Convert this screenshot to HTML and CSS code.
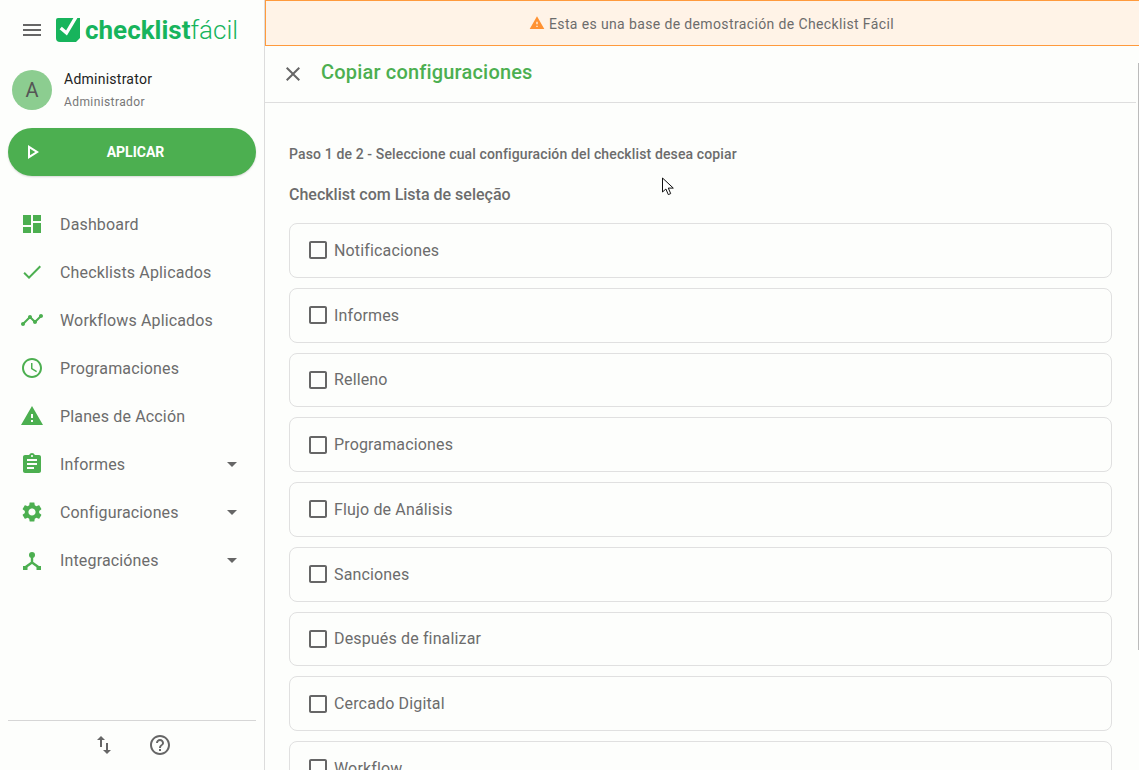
FILE: index.html
```html
<!DOCTYPE html>
<html lang="es">
<head>
    <meta charset="UTF-8">
    <meta name="viewport" content="width=device-width, initial-scale=1.0">
    <title>Copiar configuraciones</title>
    <link rel="stylesheet" href="styles.css">
</head>
<body>

    <svg class="icon-defs" width="0" height="0">
        <symbol id="i-box" viewBox="0 0 24 24"><path d="M19 5v14H5V5h14m0-2H5c-1.1 0-2 .9-2 2v14c0 1.1.9 2 2 2h14c1.1 0 2-.9 2-2V5c0-1.1-.9-2-2-2z"/></symbol>
        <symbol id="i-caret" viewBox="0 0 24 24"><path d="M7 10l5 5 5-5z"/></symbol>
    </svg>

    <aside class="sidebar">
        <div class="brand">
            <svg class="menu-icon" viewBox="0 0 24 24"><path d="M3 18h18v-2H3v2zm0-5h18v-2H3v2zm0-7v2h18V6H3z"/></svg>
            <div class="logo">
                <svg class="logo-mark" viewBox="0 0 24 24">
                    <path fill="#17b45c" d="M0 2a2 2 0 0 1 2-2h22v20l-4 4H4a4 4 0 0 1-4-4z"/>
                    <path fill="none" stroke="#fff" stroke-width="3.4" d="M4.7 10l5.8 5L20 -1"/>
                </svg>
                <span class="logo-text"><b>checklist</b>fácil</span>
            </div>
        </div>

        <div class="user">
            <div class="avatar">A</div>
            <div class="user-info">
                <div class="user-name">Administrator</div>
                <div class="user-role">Administrador</div>
            </div>
        </div>

        <button class="apply-btn">
            <svg viewBox="0 0 24 24"><path d="M10 8.64L15.27 12 10 15.36V8.64M8 5v14l11-7L8 5z"/></svg>
            <span>APLICAR</span>
        </button>

        <nav class="nav">
            <a class="nav-item">
                <svg class="nav-icon" viewBox="0 0 24 24"><path d="M3 13h8V3H3v10zm0 8h8v-6H3v6zm10 0h8V11h-8v10zm0-18v6h8V3h-8z"/></svg>
                Dashboard
            </a>
            <a class="nav-item">
                <svg class="nav-icon" viewBox="0 0 24 24"><path d="M9 16.17L4.83 12l-1.42 1.41L9 19 21 7l-1.41-1.41z"/></svg>
                Checklists Aplicados
            </a>
            <a class="nav-item">
                <svg class="nav-icon" viewBox="0 0 24 24"><path d="M23 8c0 1.1-.9 2-2 2-.18 0-.35-.02-.51-.07l-3.56 3.55c.05.16.07.34.07.52 0 1.1-.9 2-2 2s-2-.9-2-2c0-.18.02-.36.07-.52l-2.55-2.55c-.16.05-.34.07-.52.07s-.36-.02-.52-.07l-4.55 4.56c.05.16.07.33.07.51 0 1.1-.9 2-2 2s-2-.9-2-2 .9-2 2-2c.18 0 .35.02.51.07l4.56-4.55C8.02 9.36 8 9.18 8 9c0-1.1.9-2 2-2s2 .9 2 2c0 .18-.02.36-.07.52l2.55 2.55c.16-.05.34-.07.52-.07s.36.02.52.07l3.55-3.56C19.02 8.35 19 8.18 19 8c0-1.1.9-2 2-2s2 .9 2 2z"/></svg>
                Workflows Aplicados
            </a>
            <a class="nav-item">
                <svg class="nav-icon" viewBox="0 0 24 24"><path d="M11.99 2C6.47 2 2 6.48 2 12s4.47 10 9.99 10C17.52 22 22 17.52 22 12S17.52 2 11.99 2zM12 20c-4.42 0-8-3.58-8-8s3.58-8 8-8 8 3.58 8 8-3.58 8-8 8zm.5-13H11v6l5.25 3.15.75-1.23-4.5-2.67z"/></svg>
                Programaciones
            </a>
            <a class="nav-item">
                <svg class="nav-icon" viewBox="0 0 24 24"><path d="M1 21h22L12 2 1 21zm12-3h-2v-2h2v2zm0-4h-2v-4h2v4z"/></svg>
                Planes de Acción
            </a>
            <a class="nav-item">
                <svg class="nav-icon" viewBox="0 0 24 24"><path d="M19 3h-4.18C14.4 1.84 13.3 1 12 1c-1.3 0-2.4.84-2.82 2H5c-1.1 0-2 .9-2 2v14c0 1.1.9 2 2 2h14c1.1 0 2-.9 2-2V5c0-1.1-.9-2-2-2zm-7 0c.55 0 1 .45 1 1s-.45 1-1 1-1-.45-1-1 .45-1 1-1zm2 14H7v-2h7v2zm3-4H7v-2h10v2zm0-4H7V7h10v2z"/></svg>
                Informes
                <svg class="caret"><use href="#i-caret"/></svg>
            </a>
            <a class="nav-item">
                <svg class="nav-icon" viewBox="0 0 24 24"><path d="M19.14 12.94c.04-.3.06-.61.06-.94 0-.32-.02-.64-.07-.94l2.03-1.58c.18-.14.23-.41.12-.61l-1.92-3.32c-.12-.22-.37-.29-.59-.22l-2.39.96c-.5-.38-1.03-.7-1.62-.94l-.36-2.54c-.04-.24-.24-.41-.48-.41h-3.84c-.24 0-.43.17-.47.41l-.36 2.54c-.59.24-1.13.57-1.62.94l-2.39-.96c-.22-.08-.47 0-.59.22L2.74 8.87c-.12.21-.08.47.12.61l2.03 1.58c-.05.3-.09.63-.09.94s.02.64.07.94l-2.03 1.58c-.18.14-.23.41-.12.61l1.92 3.32c.12.22.37.29.59.22l2.39-.96c.5.38 1.03.7 1.62.94l.36 2.54c.05.24.24.41.48.41h3.84c.24 0 .44-.17.47-.41l.36-2.54c.59-.24 1.13-.56 1.62-.94l2.39.96c.22.08.47 0 .59-.22l1.92-3.32c.12-.22.07-.47-.12-.61l-2.01-1.58zM12 15.6c-1.98 0-3.6-1.62-3.6-3.6s1.62-3.6 3.6-3.6 3.6 1.62 3.6 3.6-1.62 3.6-3.6 3.6z"/></svg>
                Configuraciones
                <svg class="caret"><use href="#i-caret"/></svg>
            </a>
            <a class="nav-item">
                <svg class="nav-icon" viewBox="0 0 24 24">
                    <circle cx="12" cy="7" r="3"/>
                    <path fill="none" stroke="#4caf50" stroke-width="2.4" d="M12 9v6M12 14.5l-7 5M12 14.5l7 5"/>
                    <path d="M3 18h4.5v4H3zM16.5 18H21v4h-4.5z"/>
                </svg>
                Integraciónes
                <svg class="caret"><use href="#i-caret"/></svg>
            </a>
        </nav>

        <div class="side-footer">
            <svg viewBox="0 0 24 24"><path d="M16 17.01V10h-2v7.01h-3L15 21l4-3.99h-3zM9 3L5 6.99h3V14h2V6.99h3L9 3z"/></svg>
            <svg viewBox="0 0 24 24"><path d="M11 18h2v-2h-2v2zm1-16C6.48 2 2 6.48 2 12s4.48 10 10 10 10-4.48 10-10S17.52 2 12 2zm0 18c-4.41 0-8-3.59-8-8s3.59-8 8-8 8 3.59 8 8-3.59 8-8 8zm0-14c-2.21 0-4 1.79-4 4h2c0-1.1.9-2 2-2s2 .9 2 2c0 2-3 1.75-3 5h2c0-2.25 3-2.5 3-5 0-2.21-1.79-4-4-4z"/></svg>
        </div>
    </aside>

    <main class="main">
        <div class="demo-banner">
            <svg viewBox="0 0 24 24"><path d="M1 21h22L12 2 1 21zm12-3h-2v-2h2v2zm0-4h-2v-4h2v4z"/></svg>
            <span>Esta es una base de demostración de Checklist Fácil</span>
        </div>

        <header class="page-header">
            <svg viewBox="0 0 24 24"><path d="M19 6.41L17.59 5 12 10.59 6.41 5 5 6.41 10.59 12 5 17.59 6.41 19 12 13.41 17.59 19 19 17.59 13.41 12z"/></svg>
            <h1>Copiar configuraciones</h1>
        </header>

        <section class="content">
            <p class="step">Paso 1 de 2 - Seleccione cual configuración del checklist desea copiar</p>
            <h2 class="checklist-name">Checklist com Lista de seleção</h2>

            <div class="options">
                <label class="option"><svg><use href="#i-box"/></svg>Notificaciones</label>
                <label class="option"><svg><use href="#i-box"/></svg>Informes</label>
                <label class="option"><svg><use href="#i-box"/></svg>Relleno</label>
                <label class="option"><svg><use href="#i-box"/></svg>Programaciones</label>
                <label class="option"><svg><use href="#i-box"/></svg>Flujo de Análisis</label>
                <label class="option"><svg><use href="#i-box"/></svg>Sanciones</label>
                <label class="option"><svg><use href="#i-box"/></svg>Después de finalizar</label>
                <label class="option"><svg><use href="#i-box"/></svg>Cercado Digital</label>
                <label class="option"><svg><use href="#i-box"/></svg>Workflow</label>
            </div>
        </section>

        <div class="scroll-thumb"></div>
    </main>

    <svg class="cursor" viewBox="0 0 13 20"><path d="M1 1v14l3.4-3 2.4 5.6 2.4-1-2.4-5.5h5z"/></svg>

</body>
</html>
```

FILE: styles.css
```css
html, body {
    height: 100%;
}

body {
    display: flex;
    margin: 0;
    overflow: hidden;
    font-family: Roboto, "Liberation Sans", sans-serif;
    color: #6c6c6c;
    background-color: #fdfefc;
}

.icon-defs {
    position: absolute;
}

/* Sidebar */
.sidebar {
    display: flex;
    flex-direction: column;
    flex: none;
    box-sizing: border-box;
    width: 265px;
    height: 770px;
    padding: 0 8px;
    border-right: 1px solid #dcdcdc;
}

.brand {
    display: flex;
    align-items: center;
    height: 60px;
    padding-left: 12px;
}

.menu-icon {
    width: 24px;
    height: 24px;
    fill: #666;
}

.logo {
    display: flex;
    align-items: center;
    margin-left: 12px;
}

.logo-mark {
    width: 24px;
    height: 24px;
}

.logo-text {
    margin-left: 5px;
    font-size: 26px;
    font-weight: 300;
    line-height: 30px;
    color: #17b45c;
}

.logo-text b {
    font-weight: 700;
}

.user {
    display: flex;
    align-items: center;
    height: 60px;
    padding-left: 4px;
}

.avatar {
    display: flex;
    justify-content: center;
    align-items: center;
    width: 40px;
    height: 40px;
    border-radius: 50%;
    font-size: 20px;
    color: #555;
    background-color: #8ccd90;
}

.user-info {
    margin-left: 12px;
}

.user-name {
    font-size: 14px;
    line-height: 20px;
    letter-spacing: 0.25px;
    color: #222;
}

.user-role {
    margin-top: 3px;
    font-size: 12px;
    line-height: 20px;
    letter-spacing: 0.4px;
    color: #777;
}

.apply-btn {
    display: flex;
    align-items: center;
    flex: none;
    width: 248px;
    height: 48px;
    margin-top: 8px;
    padding: 0 12px;
    border: 0;
    border-radius: 24px;
    font-family: inherit;
    font-size: 14px;
    font-weight: 700;
    color: #fff;
    background-color: #4caf50;
    box-shadow: 0 1px 2px rgba(0, 0, 0, 0.15);
}

.apply-btn svg {
    width: 24px;
    height: 24px;
    fill: #fff;
}

.apply-btn span {
    flex: 1;
    padding-right: 17px;
    text-align: center;
}

.nav {
    flex: 1;
    margin-top: 24px;
}

.nav-item {
    display: flex;
    align-items: center;
    height: 48px;
    padding: 0 12px;
    font-size: 16px;
    letter-spacing: 0.15px;
}

.nav-icon {
    flex: none;
    width: 24px;
    height: 24px;
    margin-right: 16px;
    fill: #4caf50;
}

.caret {
    width: 24px;
    height: 24px;
    margin-left: auto;
    fill: #666;
}

.side-footer {
    display: flex;
    justify-content: center;
    align-items: center;
    gap: 32px;
    height: 48px;
    margin-bottom: 1px;
    border-top: 1px solid #d6d6d6;
}

.side-footer svg {
    width: 24px;
    height: 24px;
    fill: #666;
}

/* Main panel */
.main {
    position: relative;
    flex: 1;
    min-width: 0;
    height: 770px;
    overflow: hidden;
}

.demo-banner {
    display: flex;
    justify-content: center;
    align-items: center;
    box-sizing: border-box;
    height: 46px;
    padding-left: 18px;
    border: 1px solid #ff9a3c;
    border-right: 0;
    font-size: 14px;
    letter-spacing: 0.37px;
    background-color: #fff3e7;
}

.demo-banner svg {
    width: 16px;
    height: 16px;
    margin-right: 4px;
    fill: #ff9233;
}

.demo-banner span {
    margin-top: 2px;
}

.page-header {
    display: flex;
    align-items: center;
    box-sizing: border-box;
    height: 57px;
    margin-right: 3px;
    padding-left: 16px;
    border-bottom: 1px solid #dedede;
}

.page-header svg {
    width: 24px;
    height: 24px;
    fill: #666;
}

.page-header h1 {
    margin: 0 0 4px 16px;
    font-size: 20px;
    font-weight: 500;
    letter-spacing: 0.18px;
    color: #4caf50;
}

.content {
    padding: 0 27px 0 24px;
}

.step {
    margin: 42px 0 0;
    font-size: 14px;
    font-weight: 500;
    line-height: 18px;
    letter-spacing: 0.13px;
}

.checklist-name {
    margin: 22px 0 0;
    font-size: 16px;
    font-weight: 500;
    line-height: 20px;
}

.options {
    display: flex;
    flex-direction: column;
    gap: 10px;
    margin-top: 18px;
}

.option {
    display: flex;
    align-items: center;
    box-sizing: border-box;
    height: 54.75px;
    padding-left: 16px;
    border: 1px solid #e0e0e0;
    border-radius: 8px;
    font-size: 16px;
    letter-spacing: 0.15px;
}

.option svg {
    width: 24px;
    height: 24px;
    margin-right: 4px;
    fill: #666;
}

.scroll-thumb {
    position: absolute;
    top: 63px;
    right: 0;
    width: 1px;
    height: 587px;
    background-color: #bbb;
}

.cursor {
    position: absolute;
    top: 177px;
    left: 661px;
    width: 14px;
    height: 20px;
    fill: #fff;
    stroke: #111;
    stroke-width: 1;
}
```
